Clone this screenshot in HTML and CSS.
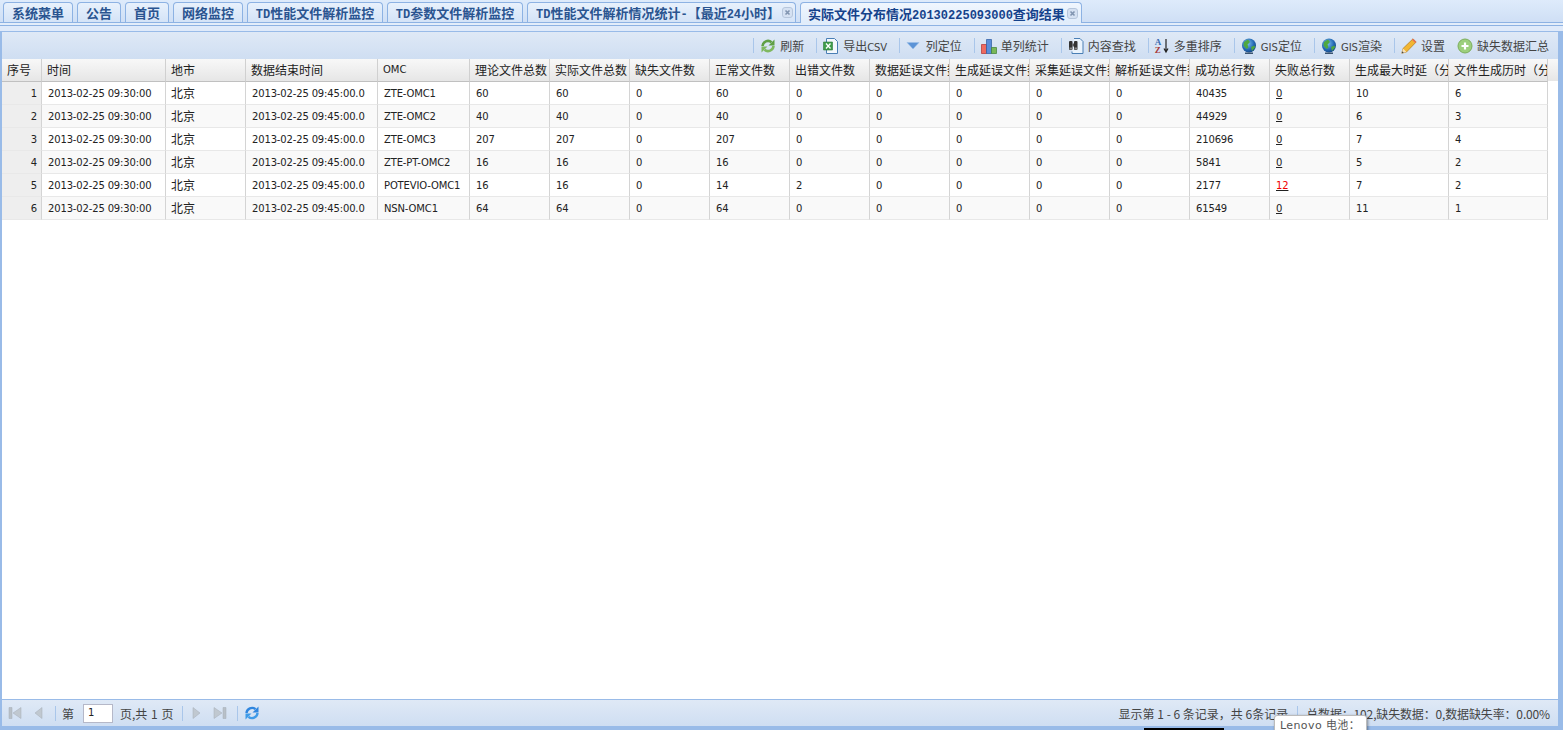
FILE: index.html
```html
<!DOCTYPE html>
<html lang="zh-CN">
<head>
    <meta charset="UTF-8">
    <title>实际文件分布情况</title>
    <link rel="stylesheet" href="styles.css">
</head>
<body>
    <div class="app">
        <div class="tabs">
            <div class="tab w-70"><span>系统菜单</span></div>
            <div class="tab w-44"><span>公告</span></div>
            <div class="tab w-44"><span>首页</span></div>
            <div class="tab w-70"><span>网络监控</span></div>
            <div class="tab w-136"><span><span class="mono">TD</span>性能文件解析监控</span></div>
            <div class="tab w-136"><span><span class="mono">TD</span>参数文件解析监控</span></div>
            <div class="tab w-269 closable"><span><span class="mono">TD</span>性能文件解析情况统计<span class="mono">-</span>【最近<span class="mono">24</span>小时】</span><svg class="close" viewBox="0 0 11 11"><rect x=".5" y=".5" width="10" height="10" rx="2.500" fill="#d5e1f2" stroke="#b6c6dc"/><path d="M3.500 3.500l4 4M7.500 3.500l-4 4" stroke="#8094b0" stroke-width="1.600"/></svg></div>
            <div class="tab w-282 closable active"><span>实际文件分布情况<span class="mono">20130225093000</span>查询结果</span><svg class="close" viewBox="0 0 11 11"><rect x=".5" y=".5" width="10" height="10" rx="2.500" fill="#d5e1f2" stroke="#b6c6dc"/><path d="M3.500 3.500l4 4M7.500 3.500l-4 4" stroke="#8094b0" stroke-width="1.600"/></svg></div>
        </div>
        <div class="tabs-foot"></div>

        <div class="panel">
            <div class="toolbar">
                <span class="sep"></span>
                <span class="tool">
                    <svg class="ico" viewBox="0 0 16 16"><path d="M2.500 8A5.500 5.500 0 0 1 11.500 4.200" fill="none" stroke="#5f9f45" stroke-width="2.600"/><path d="M14.500 1.500v6h-6z" fill="#5f9f45"/><path d="M13.500 8A5.500 5.500 0 0 1 4.500 11.800" fill="none" stroke="#7fb860" stroke-width="2.600"/><path d="M1.500 14.500v-6h6z" fill="#7fb860"/></svg>
                    <span>刷新</span>
                </span>
                <span class="sep"></span>
                <span class="tool">
                    <svg class="ico" viewBox="0 0 16 16"><path d="M3.500 .5h8l3 3v12h-11z" fill="#f4f8fd" stroke="#4a7fb5"/><path d="M.5 4h9v8h-9z" fill="#3f9c4a" stroke="#2d7a3a" stroke-width=".6"/><path d="M3 5.500l4.500 5M7.500 5.500l-4.500 5" stroke="#fff" stroke-width="1.300"/></svg>
                    <span>导出<span class="latin tight">CSV</span></span>
                </span>
                <span class="sep"></span>
                <span class="tool">
                    <svg class="ico" viewBox="0 0 16 16"><path d="M1 4.500h12l-6 6.500z" fill="#5b93d6" stroke="#9cc0e8" stroke-width=".6"/></svg>
                    <span>列定位</span>
                </span>
                <span class="sep"></span>
                <span class="tool">
                    <svg class="ico" viewBox="0 0 16 16"><path d="M.5 6.500h5v9h-5z" fill="#ee6a60" stroke="#b03030" stroke-width=".7"/><path d="M5.500 1.500h5v14h-5z" fill="#5a8edb" stroke="#2d5aa0" stroke-width=".7"/><path d="M10.500 9.500h5v6h-5z" fill="#79b858" stroke="#3f7f34" stroke-width=".7"/></svg>
                    <span>单列统计</span>
                </span>
                <span class="sep"></span>
                <span class="tool">
                    <svg class="ico" viewBox="0 0 16 16"><path d="M6 .5h6l3 3v12H4v-2" fill="#eaf3fc" stroke="#4a7fb5"/><rect x="1" y="3" width="3.500" height="9" rx="1" fill="#333"/><rect x="6" y="3" width="3.500" height="9" rx="1" fill="#333"/><path d="M4.500 5.500H6v3H4.500z" fill="#555"/><path d="M1.500 9.500h2.500v2H1.500zM6.500 9.500H9v2H6.500z" fill="#888"/></svg>
                    <span>内容查找</span>
                </span>
                <span class="sep"></span>
                <span class="tool sort">
                    <span class="az"><b class="a">A</b><b class="z">Z</b></span>
                    <svg class="arrow" viewBox="0 0 6 16"><path d="M3 1v12M1 10.500l2 3.500 2-3.500" fill="none" stroke="#222" stroke-width="1.200"/></svg>
                    <span>多重排序</span>
                </span>
                <span class="sep"></span>
                <span class="tool">
                    <svg class="ico" viewBox="0 0 16 16"><defs><radialGradient id="globe" cx=".4" cy=".35" r=".75"><stop offset="0" stop-color="#7ec0f0"/><stop offset=".6" stop-color="#2468b4"/><stop offset="1" stop-color="#123f78"/></radialGradient></defs><circle cx="8" cy="7.500" r="7" fill="url(#globe)"/><path d="M3 4l4-2.500 2 2.500-2.500 2.500 1 3-2 1.500L2.500 7.500zM10 9l3.500-1.500.5 2-3 3.500z" fill="#4fa83f"/><path d="M4 15.200h8" stroke="#14304f" stroke-width="1.200"/></svg>
                    <span><span class="latin">GIS</span>定位</span>
                </span>
                <span class="sep"></span>
                <span class="tool">
                    <svg class="ico" viewBox="0 0 16 16"><circle cx="8" cy="7.500" r="7" fill="url(#globe)"/><path d="M3 4l4-2.500 2 2.500-2.500 2.500 1 3-2 1.500L2.500 7.500zM10 9l3.500-1.500.5 2-3 3.500z" fill="#4fa83f"/><path d="M4 15.200h8" stroke="#14304f" stroke-width="1.200"/></svg>
                    <span><span class="latin">GIS</span>渲染</span>
                </span>
                <span class="sep"></span>
                <span class="tool">
                    <svg class="ico" viewBox="0 0 16 16"><path d="M.8 15.200l1.200-4.700L12 .8l3.200 3.200L5.500 14z" fill="#f2b632" stroke="#b07a1a" stroke-width=".7"/><path d="M.8 15.200l1.200-4.700 3.500 3.500z" fill="#f6e2bd"/><path d="M.8 15.200l.5-2 1.500 1.500z" fill="#444"/><path d="M11 1.800l3.200 3.200 1-1L12 .8z" fill="#e86a5a"/></svg>
                    <span>设置</span>
                </span>
                <span class="tool last">
                    <svg class="ico" viewBox="0 0 16 16"><circle cx="8" cy="8" r="7" fill="#9ccf7c" stroke="#7cae5c"/><path d="M8 4.500v7M4.500 8h7" stroke="#fff" stroke-width="2.200"/></svg>
                    <span>缺失数据汇总</span>
                </span>
            </div>

            <div class="grid">
                <table class="data">
                    <colgroup>
                        <col class="c-no"><col class="c-time"><col class="c-city"><col class="c-end"><col class="c-omc">
                        <col class="c-80"><col class="c-80"><col class="c-80"><col class="c-80"><col class="c-80">
                        <col class="c-80"><col class="c-80"><col class="c-80"><col class="c-80"><col class="c-80">
                        <col class="c-80"><col class="c-99"><col class="c-99">
                    </colgroup>
                    <thead>
                        <tr>
                            <th>序号</th><th>时间</th><th>地市</th><th>数据结束时间</th><th class="omc">OMC</th>
                            <th>理论文件总数</th><th>实际文件总数</th><th>缺失文件数</th><th>正常文件数</th><th>出错文件数</th>
                            <th>数据延误文件数</th><th>生成延误文件数</th><th>采集延误文件数</th><th>解析延误文件数</th><th>成功总行数</th>
                            <th>失败总行数</th><th>生成最大时延（分钟）</th><th>文件生成历时（分钟）</th>
                        </tr>
                    </thead>
                    <tbody>
                        <tr><td class="no">1</td><td>2013-02-25 09:30:00</td><td class="city">北京</td><td>2013-02-25 09:45:00.0</td><td>ZTE-OMC1</td><td>60</td><td>60</td><td>0</td><td>60</td><td>0</td><td>0</td><td>0</td><td>0</td><td>0</td><td>40435</td><td><a class="lnk">0</a></td><td>10</td><td>6</td></tr>
                        <tr><td class="no">2</td><td>2013-02-25 09:30:00</td><td class="city">北京</td><td>2013-02-25 09:45:00.0</td><td>ZTE-OMC2</td><td>40</td><td>40</td><td>0</td><td>40</td><td>0</td><td>0</td><td>0</td><td>0</td><td>0</td><td>44929</td><td><a class="lnk">0</a></td><td>6</td><td>3</td></tr>
                        <tr><td class="no">3</td><td>2013-02-25 09:30:00</td><td class="city">北京</td><td>2013-02-25 09:45:00.0</td><td>ZTE-OMC3</td><td>207</td><td>207</td><td>0</td><td>207</td><td>0</td><td>0</td><td>0</td><td>0</td><td>0</td><td>210696</td><td><a class="lnk">0</a></td><td>7</td><td>4</td></tr>
                        <tr><td class="no">4</td><td>2013-02-25 09:30:00</td><td class="city">北京</td><td>2013-02-25 09:45:00.0</td><td>ZTE-PT-OMC2</td><td>16</td><td>16</td><td>0</td><td>16</td><td>0</td><td>0</td><td>0</td><td>0</td><td>0</td><td>5841</td><td><a class="lnk">0</a></td><td>5</td><td>2</td></tr>
                        <tr><td class="no">5</td><td>2013-02-25 09:30:00</td><td class="city">北京</td><td>2013-02-25 09:45:00.0</td><td>POTEVIO-OMC1</td><td>16</td><td>16</td><td>0</td><td>14</td><td>2</td><td>0</td><td>0</td><td>0</td><td>0</td><td>2177</td><td><a class="lnk red">12</a></td><td>7</td><td>2</td></tr>
                        <tr><td class="no">6</td><td>2013-02-25 09:30:00</td><td class="city">北京</td><td>2013-02-25 09:45:00.0</td><td>NSN-OMC1</td><td>64</td><td>64</td><td>0</td><td>64</td><td>0</td><td>0</td><td>0</td><td>0</td><td>0</td><td>61549</td><td><a class="lnk">0</a></td><td>11</td><td>1</td></tr>
                    </tbody>
                </table>
            </div>

            <div class="pager">
                <svg class="pg" viewBox="0 0 16 16"><path d="M2 2.500h3v11H2z" fill="#b8c0c8" stroke="#a4adb6" stroke-width=".5"/><path d="M14 2.500v11L6 8z" fill="#c0c8d0" stroke="#a4adb6" stroke-width=".5"/></svg>
                <svg class="pg" viewBox="0 0 16 16"><path d="M12 2.500v11L5 8z" fill="#c0c8d0" stroke="#a4adb6" stroke-width=".5"/></svg>
                <span class="sep"></span>
                <span class="pg-text">第</span>
                <span class="page-input">1</span>
                <span class="pg-text total">页,共 1 页</span>
                <span class="sep"></span>
                <svg class="pg" viewBox="0 0 16 16"><path d="M4 2.500v11L11 8z" fill="#c0c8d0" stroke="#a4adb6" stroke-width=".5"/></svg>
                <svg class="pg" viewBox="0 0 16 16"><path d="M2 2.500v11L10 8z" fill="#c0c8d0" stroke="#a4adb6" stroke-width=".5"/><path d="M11 2.500h3v11h-3z" fill="#b8c0c8" stroke="#a4adb6" stroke-width=".5"/></svg>
                <span class="sep"></span>
                <svg class="pg" viewBox="0 0 16 16"><path d="M2.500 8A5.500 5.500 0 0 1 11.500 4.200" fill="none" stroke="#2f86df" stroke-width="2.400"/><path d="M14.500 1.500v6h-6z" fill="#2f86df"/><path d="M13.500 8A5.500 5.500 0 0 1 4.500 11.800" fill="none" stroke="#3f9be8" stroke-width="2.400"/><path d="M1.500 14.500v-6h6z" fill="#3f9be8"/></svg>
                <span class="pg-info">显示第 1 - 6 条记录，共 6条记录</span>
                <span class="sep"></span>
                <span class="pg-sum">总数据：102,缺失数据：0,数据缺失率：0.00%</span>
            </div>
        </div>
    </div>

    <div class="tooltip">Lenovo 电池：</div>
    <div class="task-strip"></div>
</body>
</html>
```

FILE: styles.css
```css
/* Base */
html, body {
    margin: 0;
    height: 730px;
    overflow: hidden;
}

body {
    position: relative;
    font-family: "DejaVu Sans", "Noto Sans CJK SC", sans-serif;
    font-size: 10px;
    color: #222;
    background-color: #99bbe8;
}

.app {
    display: flex;
    flex-direction: column;
    height: 730px;
    background: linear-gradient(#dfeafa, #dfeafa 31px, #99bbe8 31px);
}

/* Tabs */
.tabs {
    display: flex;
    gap: 4px;
    height: 23px;
    flex: none;
    box-sizing: border-box;
    padding: 2px 0 0 3px;
    background: linear-gradient(#deebfb, #cfdff5);
    border-bottom: 1px solid #8db2e3;
}

.tabs-foot {
    height: 2px;
    flex: none;
    border-bottom: 1px solid #8db2e3;
    background-color: #e3edfa;
}

.tab {
    display: flex;
    align-items: center;
    justify-content: center;
    box-sizing: border-box;
    height: 20px;
    font-family: "Noto Sans CJK SC", sans-serif;
    font-size: 13px;
    font-weight: 700;
    color: #2a5490;
    white-space: nowrap;
    background: linear-gradient(#e8f1fc, #d4e3f7);
    border: 1px solid #8db2e3;
    border-bottom: none;
    border-radius: 4px 4px 0 0;
}

.tab.active {
    height: 21px;
    color: #15428b;
    background: linear-gradient(#f0f6fe, #e0ecfb);
}

.tab.closable {
    justify-content: flex-start;
    padding-left: 8px;
}

.tab.active.closable {
    padding-left: 7px;
}

.mono {
    font-family: "Liberation Mono", monospace;
    font-size: 12px;
}

.close {
    width: 11px;
    height: 11px;
    flex: none;
    margin-left: auto;
    margin-right: 2px;
}

.tab.active .close {
    margin-right: 3px;
}

.w-44 { width: 44px; }
.w-70 { width: 70px; }
.w-136 { width: 136px; }
.w-269 { width: 269px; }
.w-282 { width: 282px; }

/* Panel */
.panel {
    flex: 1;
    display: flex;
    flex-direction: column;
    min-height: 0;
    margin-top: 5px;
    margin-bottom: 4px;
    margin-right: 3px;
    border-top: 1px solid #99bbe8;
    border-left: 2px solid #99bbe8;
    border-right: 2px solid #99bbe8;
    background-color: #fff;
}

.toolbar {
    display: flex;
    align-items: center;
    justify-content: flex-end;
    height: 27px;
    flex: none;
    padding-right: 9px;
    background: linear-gradient(#dfe9f6, #cfdef2);
    font-family: "Noto Sans CJK SC", sans-serif;
    font-size: 12px;
    color: #444;
}

.sep {
    flex: none;
    width: 1px;
    height: 15px;
    margin: 0 6px;
    background-color: #a9c6ea;
}

.tool {
    display: flex;
    align-items: center;
    gap: 4px;
    margin-right: 6px;
    white-space: nowrap;
}

.tool.last {
    margin-left: 6px;
    margin-right: 0;
}

.ico {
    width: 16px;
    height: 16px;
    flex: none;
}

.latin {
    font-family: "DejaVu Sans", sans-serif;
    font-size: 10px;
}

.latin.tight {
    letter-spacing: -0.2px;
}

/* A-Z sort icon */
.az {
    display: flex;
    flex-direction: column;
    width: 8px;
    line-height: 8px;
    font-family: "Liberation Serif", serif;
    font-size: 9px;
}

.az .a { color: #3a6ab0; }
.az .z { color: #a83a3a; }

.arrow {
    width: 6px;
    height: 16px;
    margin-right: 5px;
}

.sort {
    gap: 0;
}

/* Grid */
.grid {
    flex: 1;
    min-height: 0;
    overflow: hidden;
    background:
        linear-gradient(#f8f8f8, #e6e6e6) top left / 100% 22px no-repeat,
        #fff;
}

.data {
    table-layout: fixed;
    width: 1546px;
    border-collapse: separate;
    border-spacing: 0;
    letter-spacing: -0.15px;
}

.c-no { width: 40px; }
.c-time { width: 124px; }
.c-city { width: 80px; }
.c-end { width: 132px; }
.c-omc { width: 92px; }
.c-80 { width: 80px; }
.c-99 { width: 99px; }

.data th {
    box-sizing: border-box;
    height: 23px;
    padding: 0 0 1px 5px;
    overflow: hidden;
    white-space: nowrap;
    text-align: left;
    font-family: "Noto Sans CJK SC", sans-serif;
    font-size: 12px;
    font-weight: 400;
    letter-spacing: 0;
    color: #222;
    background: linear-gradient(#f8f8f8, #e6e6e6);
    border-right: 1px solid #d0d0d0;
    border-bottom: 1px solid #c0c0c0;
}

.data th.omc {
    font-family: "DejaVu Sans", sans-serif;
    font-size: 10px;
}

.data td {
    box-sizing: border-box;
    height: 23px;
    padding: 0 0 0 6px;
    overflow: hidden;
    white-space: nowrap;
    border-right: 1px solid #d4d4d4;
    border-bottom: 1px solid #e8e8e8;
}

.data tbody tr:nth-child(even) td {
    background-color: #f9f9f9;
}

.data td.no,
.data tbody tr:nth-child(even) td.no {
    padding: 0 4px 0 0;
    text-align: right;
    background-color: #eeeeee;
}

.data td.city {
    padding: 0 0 1px 5px;
    font-family: "Noto Sans CJK SC", sans-serif;
    font-size: 12px;
    letter-spacing: 0;
}

.lnk {
    color: #222;
    text-decoration: underline;
}

.lnk.red {
    color: #f00000;
    text-decoration-color: #222;
}

/* Pager */
.pager {
    display: flex;
    align-items: center;
    box-sizing: border-box;
    height: 27px;
    flex: none;
    padding: 0 8px 0 5px;
    border-top: 1px solid #99bbe8;
    background: linear-gradient(#dfe9f6, #cfdef2);
    font-family: "Noto Sans CJK SC", sans-serif;
    font-size: 12px;
    color: #444;
}

.pager .sep {
    margin: 0 6px 0 9px;
}

.pg {
    width: 16px;
    height: 16px;
    flex: none;
}

.pg + .pg {
    margin-left: 7px;
}

.pg-text {
    white-space: nowrap;
}

.pg-text.total {
    margin-left: 7px;
    word-spacing: 1px;
}

.page-input {
    box-sizing: border-box;
    width: 30px;
    height: 19px;
    margin-left: 9px;
    padding: 2px 0 0 4px;
    font-family: "DejaVu Sans", sans-serif;
    font-size: 10px;
    color: #222;
    background-color: #fff;
    border: 1px solid #b5b8c8;
}

.pg-info {
    margin-left: auto;
    white-space: nowrap;
}

.pg-sum {
    margin-left: 2px;
    letter-spacing: -0.15px;
    white-space: nowrap;
}

/* Things lying over the page */
.tooltip {
    position: absolute;
    left: 1274px;
    top: 715px;
    width: 93px;
    height: 20px;
    box-sizing: border-box;
    padding: 3px 0 0 5px;
    line-height: 14px;
    letter-spacing: 0.4px;
    font-family: "DejaVu Sans", "Noto Sans CJK SC", sans-serif;
    font-size: 11px;
    color: #555;
    background-color: #fff;
    border: 1px solid #bbb;
    border-radius: 3px;
    box-shadow: 1px 1px 3px rgba(0, 0, 0, 0.4);
}

.task-strip {
    position: absolute;
    left: 1144px;
    top: 728px;
    width: 80px;
    height: 2px;
    background-color: #000;
}
```
